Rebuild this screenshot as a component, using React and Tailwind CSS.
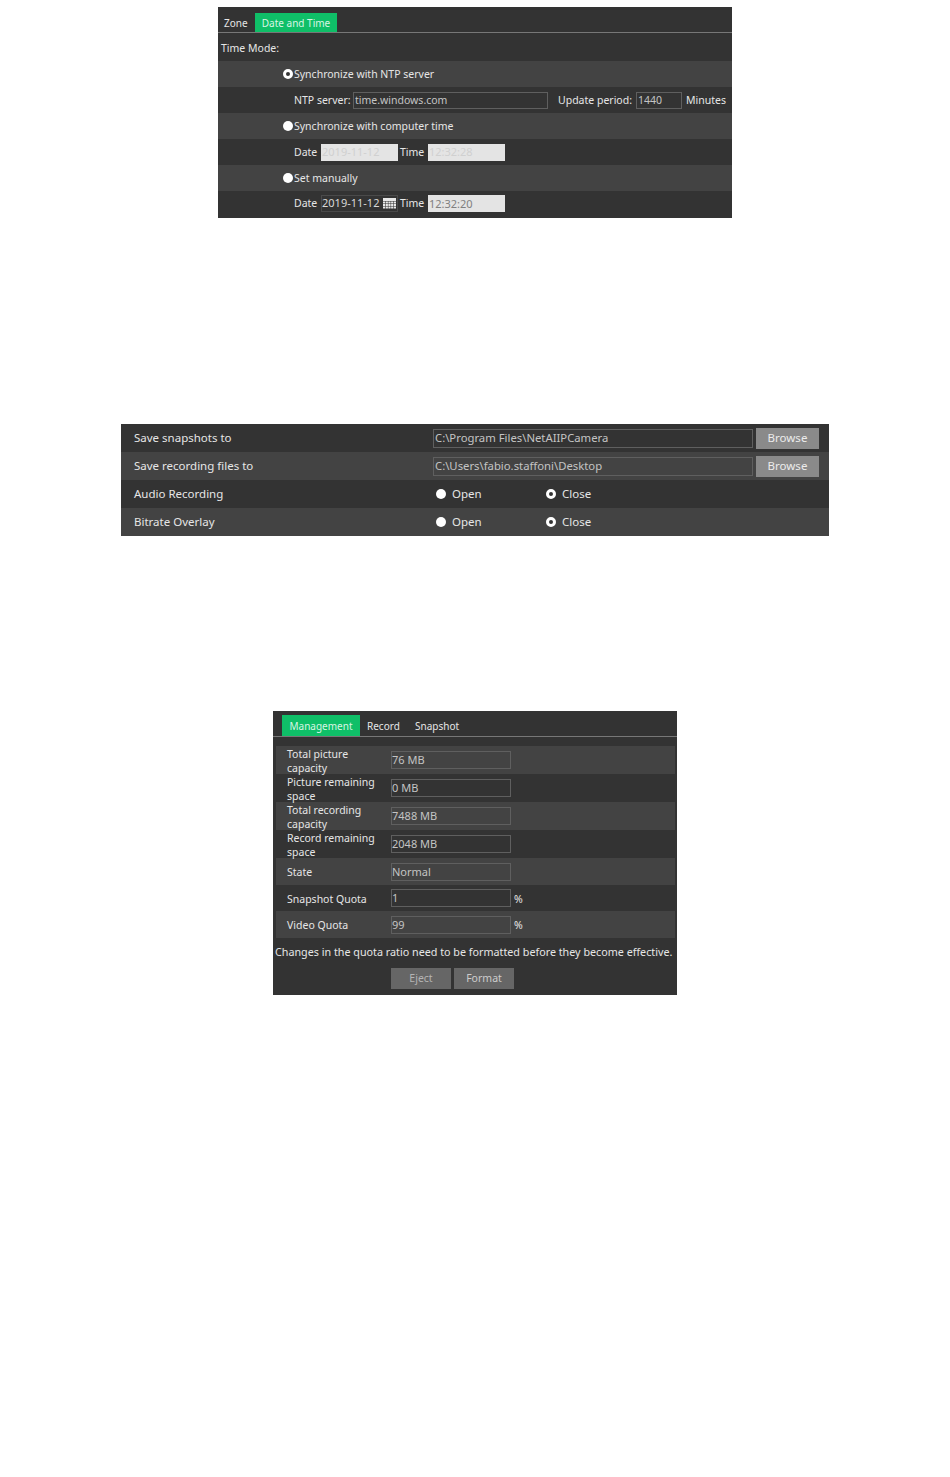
import React from 'react';

const FONT = "font-['Noto_Sans','Open_Sans',sans-serif]";

function Radio({ checked }) {
  return (
    <span
      className={`inline-block w-[10px] h-[10px] shrink-0 rounded-full ${
        checked ? 'border-[3px] border-white bg-[#333333]' : 'bg-white'
      }`}
    />
  );
}

function CalendarIcon() {
  return (
    <svg width="13" height="12" viewBox="0 0 13 12" className="shrink-0">
      <rect x="0" y="0" width="13" height="3" fill="#e8e8e8" />
      {[3.5, 6, 8.5].map((y) =>
        [0, 2.7, 5.4, 8.1, 10.8].map((x) => (
          <rect key={`${x}-${y}`} x={x} y={y} width="2.2" height="2" fill="#e8e8e8" />
        ))
      )}
    </svg>
  );
}

function DarkInput({ value, className }) {
  return (
    <div className={`flex items-center border border-[#5f5f5f] text-[#c4c4c4] leading-none whitespace-nowrap ${className}`}>
      {value}
    </div>
  );
}

function GreyInput({ value, className, textClass }) {
  return (
    <div className={`flex items-center h-[17px] bg-[#e4e4e4] pl-[1px] pb-[1px] text-[11px] leading-none ${textClass} ${className}`}>
      {value}
    </div>
  );
}

function DateAndTime() {
  return (
    <div className="w-[514px] h-[211px] bg-[#333333] text-[10.5px] text-[#e6e6e6]">
      <div className="flex items-end h-[26px] border-b border-[#777777] pl-[6px]">
        <span className="flex items-center h-[20px] pt-[2px] text-[10px] w-[31px]">Zone</span>
        <span className="flex items-center justify-center h-[19px] pt-[1px] w-[82px] bg-[#0fbf68] text-[10px] text-[#d8f5e4]">Date and Time</span>
      </div>
      <div className="flex items-center h-[28px] pl-[3px] pt-[4px]">Time Mode:</div>
      <div className="flex items-center h-[26px] bg-[#434343] pl-[65px] gap-[1px]">
        <Radio checked />
        <span className="pt-[2px]">Synchronize with NTP server</span>
      </div>
      <div className="flex items-center h-[26px] pl-[76px] whitespace-nowrap">
        <span className="w-[59px] pt-[2px]">NTP server:</span>
        <DarkInput value="time.windows.com" className="w-[195px] h-[17px] pl-[1px]" />
        <span className="ml-[10px] w-[78px] pt-[2px]">Update period:</span>
        <DarkInput value="1440" className="w-[46px] h-[17px] pl-[1px]" />
        <span className="ml-[4px] pt-[2px]">Minutes</span>
      </div>
      <div className="flex items-center h-[26px] bg-[#434343] pl-[65px] gap-[1px]">
        <Radio />
        <span className="pt-[2px]">Synchronize with computer time</span>
      </div>
      <div className="flex items-center h-[26px] pl-[76px]">
        <span className="w-[27px] pt-[2px]">Date</span>
        <GreyInput value="2019-11-12" className="w-[77px]" textClass="text-[#d0d0d0]" />
        <span className="ml-[2px] w-[28px] pt-[2px]">Time</span>
        <GreyInput value="12:32:28" className="w-[77px]" textClass="text-[#d0d0d0]" />
      </div>
      <div className="flex items-center h-[26px] bg-[#434343] pl-[65px] gap-[1px]">
        <Radio />
        <span className="pt-[2px]">Set manually</span>
      </div>
      <div className="flex items-center h-[27px] pl-[76px] pb-[2px]">
        <span className="w-[27px]">Date</span>
        <div className="flex items-center justify-between w-[77px] h-[17px] border border-[#4a4a4a] pr-[1px] text-[11px] text-[#d8d8d8]">
          <span>2019-11-12</span>
          <CalendarIcon />
        </div>
        <span className="ml-[2px] w-[28px]">Time</span>
        <GreyInput value="12:32:20" className="w-[77px]" textClass="text-[#808080]" />
      </div>
    </div>
  );
}

function PathRow({ label, value, light }) {
  return (
    <div className={`flex items-center h-[28px] pl-[13px] ${light ? 'bg-[#434343]' : 'bg-[#333333]'}`}>
      <span className="w-[299px]">{label}</span>
      <DarkInput value={value} className="w-[320px] h-[19px] pl-[1px] text-[11.3px]" />
      <button className="ml-[3px] w-[63px] h-[21px] bg-[#8a8a8a] text-[#ececec]">Browse</button>
    </div>
  );
}

function OpenCloseRow({ label, light }) {
  return (
    <div className={`flex items-center h-[28px] pl-[13px] ${light ? 'bg-[#434343]' : 'bg-[#333333]'}`}>
      <span className="w-[302px]">{label}</span>
      <Radio />
      <span className="ml-[6px] w-[94px]">Open</span>
      <Radio checked />
      <span className="ml-[6px]">Close</span>
    </div>
  );
}

function LocalSettings() {
  return (
    <div className="w-[708px] h-[112px] text-[11.5px] text-[#e6e6e6]">
      <PathRow label="Save snapshots to" value="C:\Program Files\NetAIIPCamera" />
      <PathRow label="Save recording files to" value="C:\Users\fabio.staffoni\Desktop" light />
      <OpenCloseRow label="Audio Recording" />
      <OpenCloseRow label="Bitrate Overlay" light />
    </div>
  );
}

// pad keeps the value text on the reference's baseline: row heights differ by 1px
const STORAGE_ROWS = [
  { label: 'Total picture capacity', value: '76 MB', h: 'h-[28px]', pad: 'pb-[2px]' },
  { label: 'Picture remaining space', value: '0 MB', h: 'h-[28px]', pad: 'pb-[2px]' },
  { label: 'Total recording capacity', value: '7488 MB', h: 'h-[28px]', pad: 'pb-[2px]' },
  { label: 'Record remaining space', value: '2048 MB', h: 'h-[28px]', pad: 'pb-[2px]' },
  { label: 'State', value: 'Normal', h: 'h-[27px]', pad: 'pb-[1px]' },
  { label: 'Snapshot Quota', value: '1', unit: '%', h: 'h-[26px]', pad: 'pb-[1px]' },
  { label: 'Video Quota', value: '99', unit: '%', h: 'h-[27px]', pad: 'pb-[1px]' },
];

function Storage() {
  return (
    <div className="w-[404px] h-[284px] bg-[#333333] text-[10.5px] text-[#e6e6e6]">
      <div className="flex items-end h-[26px] border-b border-[#777777] pl-[9px]">
        <span className="flex items-center justify-center h-[21px] pt-[1px] w-[78px] bg-[#0fbf68] text-[10px] text-[#d8f5e4]">Management</span>
        <span className="flex items-center h-[21px] pt-[1px] ml-[7px] w-[48px] text-[10px]">Record</span>
        <span className="flex items-center h-[21px] pt-[1px] text-[10px]">Snapshot</span>
      </div>
      <div className="ml-[3px] mr-[2px] mt-[9px]">
        {STORAGE_ROWS.map((row, i) => (
          <div key={row.label} className={`flex items-center pl-[11px] ${row.h} ${i % 2 === 0 ? 'bg-[#434343]' : ''}`}>
            <span className="w-[96px] mr-[8px] leading-[14px] pt-[1px]">{row.label}</span>
            <DarkInput value={row.value} className={`w-[120px] h-[18px] text-[11px] ${row.pad}`} />
            {row.unit && <span className="ml-[3px] pt-[3px]">{row.unit}</span>}
          </div>
        ))}
      </div>
      <p className="flex items-center h-[27px] pl-[2px] pt-[2px] text-[10.75px] whitespace-nowrap">
        Changes in the quota ratio need to be formatted before they become effective.
      </p>
      <div className="flex gap-[3px] pl-[118px] mt-[3px]">
        <button className="w-[60px] h-[21px] pt-[1px] bg-[#666666] text-[#b4b4b4]">Eject</button>
        <button className="w-[60px] h-[21px] pt-[1px] bg-[#666666] text-[#cccccc]">Format</button>
      </div>
    </div>
  );
}

export default function App() {
  return (
    <div className={`flex flex-col items-center min-h-[1477px] bg-white pt-[7px] ${FONT}`}>
      <DateAndTime />
      <div className="mt-[206px]">
        <LocalSettings />
      </div>
      <div className="mt-[175px]">
        <Storage />
      </div>
    </div>
  );
}
